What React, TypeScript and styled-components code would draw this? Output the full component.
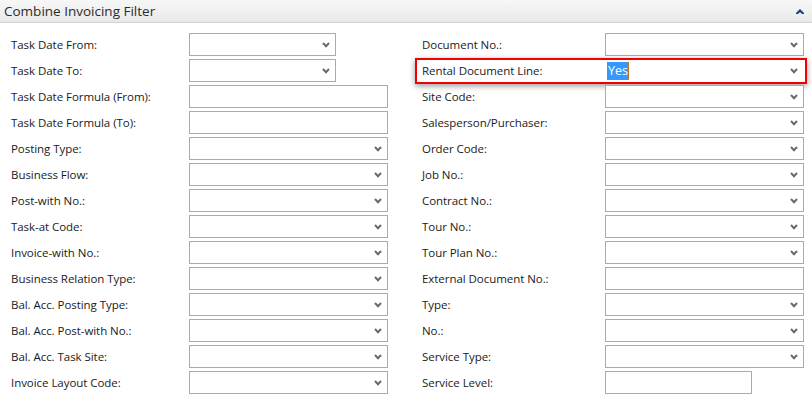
import React from "react";
import styled, { createGlobalStyle } from "styled-components";

const Global = createGlobalStyle`
  html, body { margin: 0; padding: 0; background: #ffffff; }
  body { font-family: "Open Sans", "Noto Sans", sans-serif; }
`;

const Page = styled.div`
  width: 812px;
  height: 406px;
  background: #fff;
  overflow: hidden;
`;

const Header = styled.div`
  height: 22px;
  display: flex;
  align-items: center;
  justify-content: space-between;
  padding: 0 8px 0 4px;
  background: linear-gradient(#f7f7f7, #e8e9e9);
  border-bottom: 1px solid #d3d3d3;
`;

const Title = styled.span`
  font-size: 13.5px;
  color: #2b2b2b;
`;

const Body = styled.div`
  display: grid;
  grid-template-columns: 411px 401px;
  padding-top: 10px;
`;

const Column = styled.div<{ $indent: number; $labelW: number }>`
  display: flex;
  flex-direction: column;
  gap: 3px;
  padding-left: ${(p) => p.$indent}px;
  --label-w: ${(p) => p.$labelW}px;
`;

const Row = styled.div<{ $highlight?: boolean }>`
  position: relative;
  display: flex;
  align-items: center;
  height: 23px;
  ${(p) =>
    p.$highlight &&
    `
    &::after {
      content: "";
      position: absolute;
      left: -7px;
      top: -1px;
      width: 388px;
      height: 22px;
      border: 2px solid #f00000;
      box-shadow: 0 2px 6px rgba(0,0,0,0.4);
      pointer-events: none;
    }
  `}
`;

const Label = styled.span`
  width: var(--label-w);
  flex: none;
  font-size: 11.5px;
  color: #1a1a1a;
  letter-spacing: -0.05px;
  white-space: nowrap;
`;

const Field = styled.div<{ $w: number; $plain?: boolean }>`
  position: relative;
  box-sizing: border-box;
  width: ${(p) => p.$w}px;
  height: 23px;
  border: 1px solid ${(p) => (p.$plain ? "transparent" : "#ababab")};
  background: #fff;
  display: flex;
  align-items: center;
  padding-left: 1px;
`;

const Chevron = styled.svg`
  position: absolute;
  right: 5px;
  top: 8px;
`;

const Selected = styled.span`
  font-size: 12.5px;
  line-height: 18px;
  background: #3399ff;
  color: #fff;
  padding: 0 0 0 1px;
  border-right: 1px solid #c0722c;
`;

const CollapseIcon = styled.svg`
  display: block;
`;

const Down = () => (
  <Chevron width="8" height="6" viewBox="0 0 8 6">
    <polyline points="1,1 4,4.2 7,1" fill="none" stroke="#6a6a6a" strokeWidth="2" />
  </Chevron>
);

type F = { label: string; kind: "dd" | "ddShort" | "text" | "textShort"; value?: string; highlight?: boolean };

const left: F[] = [
  { label: "Task Date From:", kind: "ddShort" },
  { label: "Task Date To:", kind: "ddShort" },
  { label: "Task Date Formula (From):", kind: "text" },
  { label: "Task Date Formula (To):", kind: "text" },
  { label: "Posting Type:", kind: "dd" },
  { label: "Business Flow:", kind: "dd" },
  { label: "Post-with No.:", kind: "dd" },
  { label: "Task-at Code:", kind: "dd" },
  { label: "Invoice-with No.:", kind: "dd" },
  { label: "Business Relation Type:", kind: "dd" },
  { label: "Bal. Acc. Posting Type:", kind: "dd" },
  { label: "Bal. Acc. Post-with No.:", kind: "dd" },
  { label: "Bal. Acc. Task Site:", kind: "dd" },
  { label: "Invoice Layout Code:", kind: "dd" },
];

const right: F[] = [
  { label: "Document No.:", kind: "dd" },
  { label: "Rental Document Line:", kind: "dd", value: "Yes", highlight: true },
  { label: "Site Code:", kind: "dd" },
  { label: "Salesperson/Purchaser:", kind: "dd" },
  { label: "Order Code:", kind: "dd" },
  { label: "Job No.:", kind: "dd" },
  { label: "Contract No.:", kind: "dd" },
  { label: "Tour No.:", kind: "dd" },
  { label: "Tour Plan No.:", kind: "dd" },
  { label: "External Document No.:", kind: "text" },
  { label: "Type:", kind: "dd" },
  { label: "No.:", kind: "dd" },
  { label: "Service Type:", kind: "dd" },
  { label: "Service Level:", kind: "textShort" },
];

const FieldRow = ({ f }: { f: F }) => {
  const short = f.kind === "ddShort" || f.kind === "textShort";
  const dd = f.kind === "dd" || f.kind === "ddShort";
  return (
    <Row $highlight={f.highlight}>
      <Label>{f.label}</Label>
      <Field $w={short ? 147 : 199} $plain={f.highlight}>
        {f.value && <Selected>{f.value}</Selected>}
        {dd && <Down />}
      </Field>
    </Row>
  );
};

export default function App() {
  return (
    <Page>
      <Global />
      <Header>
        <Title>Combine Invoicing Filter</Title>
        <CollapseIcon width="8" height="6" viewBox="0 0 8 6">
          <polygon points="0,5 4,1 8,5 8,6 6,6 4,4 2,6 0,6" fill="#1b3a93" />
        </CollapseIcon>
      </Header>
      <Body>
        <Column $indent={11} $labelW={178}>
          {left.map((f) => (
            <FieldRow key={f.label} f={f} />
          ))}
        </Column>
        <Column $indent={11} $labelW={183}>
          {right.map((f) => (
            <FieldRow key={f.label} f={f} />
          ))}
        </Column>
      </Body>
    </Page>
  );
}
